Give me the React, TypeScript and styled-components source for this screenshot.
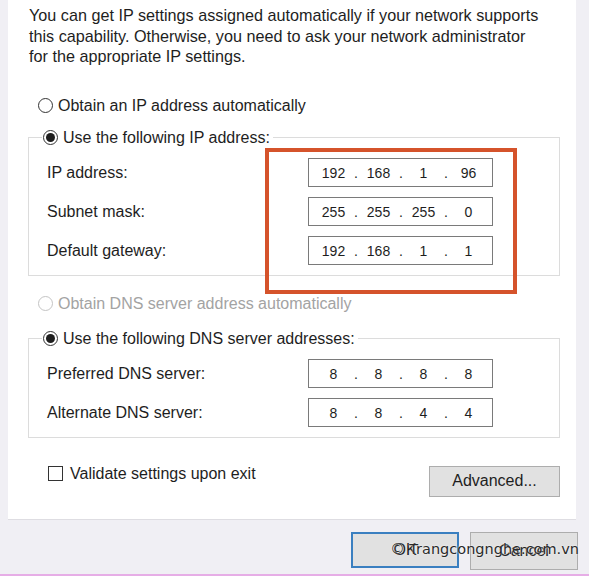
import styled, { createGlobalStyle } from 'styled-components';

const GlobalStyle = createGlobalStyle`
  html, body {
    margin: 0;
    padding: 0;
    background: #f0eff4;
  }
  * {
    box-sizing: border-box;
  }
`;

const IP_ROWS = [
  { label: 'IP address:', value: ['192', '168', '1', '96'] },
  { label: 'Subnet mask:', value: ['255', '255', '255', '0'] },
  { label: 'Default gateway:', value: ['192', '168', '1', '1'] },
];

const DNS_ROWS = [
  { label: 'Preferred DNS server:', value: ['8', '8', '8', '8'] },
  { label: 'Alternate DNS server:', value: ['8', '8', '4', '4'] },
];

function IpField({ value }: { value: string[] }) {
  return (
    <StIpBox>
      {value.map((octet, i) => [
        <StOctet key={`o${i}`}>{octet}</StOctet>,
        i < 3 ? <StDot key={`d${i}`}>.</StDot> : null,
      ])}
    </StIpBox>
  );
}

function Radio({ checked, disabled, children }: { checked?: boolean; disabled?: boolean; children: string }) {
  return (
    <StRadioRow $disabled={disabled}>
      <StRadioCircle $disabled={disabled}>{checked && <StRadioDot />}</StRadioCircle>
      {children}
    </StRadioRow>
  );
}

function App() {
  return (
    <StPage>
      <GlobalStyle />
      <StPanel>
        <StIntro>
          You can get IP settings assigned automatically if your network supports
          <br />
          this capability. Otherwise, you need to ask your network administrator
          <br />
          for the appropriate IP settings.
        </StIntro>

        <StTopRadio>
          <Radio>Obtain an IP address automatically</Radio>
        </StTopRadio>

        <StGroup $top={12}>
          <StLegend>
            <Radio checked>Use the following IP address:</Radio>
          </StLegend>
          {IP_ROWS.map((row) => (
            <StFieldRow key={row.label}>
              <StLabel>{row.label}</StLabel>
              <IpField value={row.value} />
            </StFieldRow>
          ))}
          <StHighlight />
        </StGroup>

        <StDnsRadio>
          <Radio disabled>Obtain DNS server address automatically</Radio>
        </StDnsRadio>

        <StGroup $top={15}>
          <StLegend>
            <Radio checked>Use the following DNS server addresses:</Radio>
          </StLegend>
          {DNS_ROWS.map((row) => (
            <StFieldRow key={row.label}>
              <StLabel>{row.label}</StLabel>
              <IpField value={row.value} />
            </StFieldRow>
          ))}
        </StGroup>

        <StOptionsRow>
          <StCheckRow>
            <StCheckBox />
            Validate settings upon exit
          </StCheckRow>
          <StButton $width={131} $height={31}>
            Advanced...
          </StButton>
        </StOptionsRow>
      </StPanel>

      <StFooter>
        <StButton $width={108} $height={36} $primary>
          OK
        </StButton>
        <StButton $width={108} $height={38}>
          Cancel
        </StButton>
        <StWatermark>© Trangcongnghe.com.vn</StWatermark>
      </StFooter>
      <StPinkLine />
    </StPage>
  );
}

export default App;

const StPage = styled.div`
  position: relative;
  display: flex;
  flex-direction: column;
  width: 589px;
  height: 576px;
  padding-left: 8px;
  overflow: hidden;
  background: #f0eff4;
  font-family: 'Liberation Sans', Arial, sans-serif;
  font-size: 16px;
  color: #1e1e1e;
`;

const StPanel = styled.div`
  display: flex;
  flex-direction: column;
  width: 568px;
  height: 520px;
  background: #ffffff;
  border-bottom: 1px solid #dedde2;
`;

const StIntro = styled.p`
  margin: 5px 0 0 21px;
  font-size: 16.2px;
  line-height: 20.5px;
  white-space: nowrap;
`;

const StTopRadio = styled.div`
  margin: 29px 0 0 30px;
`;

const StDnsRadio = styled.div`
  margin: 18px 0 0 30px;
`;

const StRadioRow = styled.div<{ $disabled?: boolean }>`
  display: flex;
  align-items: center;
  gap: 5px;
  height: 20px;
  color: ${({ $disabled }) => ($disabled ? '#a3a3a3' : '#1e1e1e')};
  white-space: nowrap;
`;

const StRadioCircle = styled.span<{ $disabled?: boolean }>`
  display: flex;
  align-items: center;
  justify-content: center;
  width: 15px;
  height: 15px;
  border-radius: 50%;
  border: 1px solid ${({ $disabled }) => ($disabled ? '#c4c4c4' : '#333333')};
  background: #ffffff;
`;

const StRadioDot = styled.span`
  width: 9px;
  height: 9px;
  border-radius: 50%;
  background: #1e1e1e;
`;

const StGroup = styled.fieldset<{ $top: number }>`
  position: relative;
  display: flex;
  flex-direction: column;
  gap: 10px;
  width: 532px;
  margin: ${({ $top }) => $top}px 0 0 20px;
  padding: 10px 0 10px 13px;
  border: 1px solid #dcdcdc;
  min-inline-size: 0;
`;

const StLegend = styled.legend`
  padding: 0 3px 0 1px;
`;

const StFieldRow = styled.div`
  display: flex;
  align-items: center;
  height: 29px;
`;

const StLabel = styled.span`
  width: 266px;
  padding: 2px 0 0 5px;
`;

const StIpBox = styled.div`
  display: grid;
  grid-template-columns: 41px 4px 41px 4px 41px 4px 41px;
  align-items: center;
  width: 185px;
  height: 29px;
  padding: 1px 0 0 4px;
  border: 1px solid #7a7a7a;
  background: #ffffff;
  font-size: 14px;
`;

const StOctet = styled.span`
  text-align: center;
`;

const StDot = styled.span`
  text-align: center;
`;

const StHighlight = styled.div`
  position: absolute;
  left: 236px;
  top: 0px;
  width: 252px;
  height: 146px;
  border: 4px solid #d5532b;
  pointer-events: none;
`;

const StOptionsRow = styled.div`
  display: flex;
  align-items: flex-start;
  justify-content: space-between;
  width: 532px;
  margin: 26px 0 0 20px;
  padding-left: 20px;
`;

const StCheckRow = styled.div`
  display: flex;
  align-items: center;
  gap: 7px;
  height: 20px;
`;

const StCheckBox = styled.span`
  width: 15px;
  height: 15px;
  border: 1px solid #333333;
  background: #ffffff;
`;

const StButton = styled.div<{ $width: number; $height: number; $primary?: boolean }>`
  display: flex;
  align-items: center;
  justify-content: center;
  width: ${({ $width }) => $width}px;
  height: ${({ $height }) => $height}px;
  margin-top: 2px;
  background: #e1e1e1;
  border: ${({ $primary }) => ($primary ? '2px solid #3a7fc0' : '1px solid #adadad')};
  color: #1e1e1e;
`;

const StFooter = styled.div`
  position: relative;
  display: flex;
  align-items: flex-start;
  justify-content: flex-end;
  gap: 11px;
  width: 570px;
  padding-top: 10px;
`;

const StWatermark = styled.span`
  position: absolute;
  right: -1px;
  top: 21px;
  font-family: 'DejaVu Sans', 'Liberation Sans', sans-serif;
  font-size: 14.5px;
  color: #2a2a2a;
  text-shadow: 0 0 2px #ffffff;
  white-space: nowrap;
`;

const StPinkLine = styled.div`
  position: absolute;
  left: 0;
  bottom: 0;
  width: 589px;
  height: 2px;
  background: #e6ade6;
`;
